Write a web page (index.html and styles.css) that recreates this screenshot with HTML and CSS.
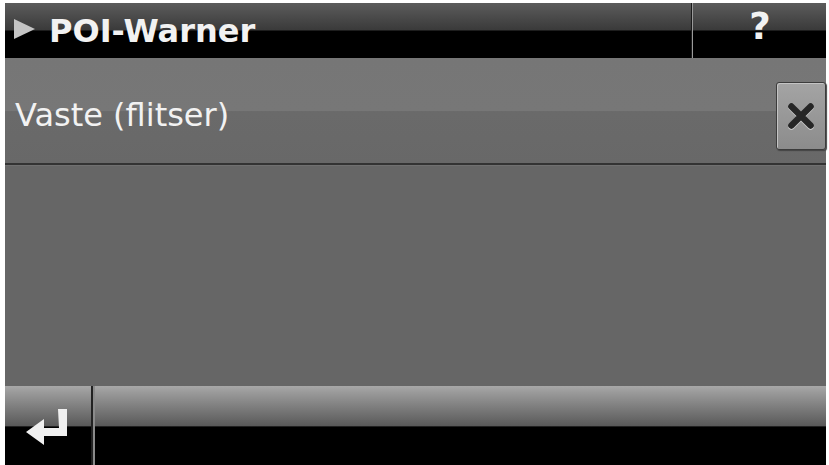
FILE: index.html
```html
<!DOCTYPE html>
<html lang="nl">
<head>
  <meta charset="UTF-8" />
  <meta name="viewport" content="width=device-width, initial-scale=1" />
  <title>POI-Warner</title>
  <link rel="stylesheet" href="styles.css">
</head>
<body>

  <div class="scherm">
    <header class="kop">
      <div class="kop-titel">
        <span class="pijl"></span>
        <h1>POI-Warner</h1>
      </div>
      <button class="kop-help" type="button">?</button>
    </header>

    <main class="lijst">
      <div class="rij">
        <span class="rij-tekst">Vaste (flitser)</span>
        <button class="wis" type="button" aria-label="Verwijderen">
          <svg viewBox="0 0 30 30" width="32" height="32">
            <path class="wis-licht" d="M6 7 L24 25 M24 7 L6 25" />
            <path class="wis-kruis" d="M6 6 L24 24 M24 6 L6 24" />
          </svg>
        </button>
      </div>
    </main>

    <footer class="voet">
      <button class="terug" type="button" aria-label="Terug">
        <svg viewBox="0 0 46 40" width="46" height="40">
          <path d="M33 1 H42 V28 H19 V37 L1 24 L19 11 V20 H34 Z" />
        </svg>
      </button>
      <div class="voet-rest"></div>
    </footer>
  </div>

</body>
</html>
```

FILE: styles.css
```css
:root {
  --grijs: #666;
  --zwart: #000;
  --wit: #f2f2f2;
  --font-family: 'DejaVu Sans', 'Open Sans', sans-serif;
}

body {
  margin: 0;
  background-color: #fff;
  font-family: var(--font-family);
}

.scherm {
  width: 821px;
  height: 462px;
  margin: 3px 3px 0 5px;
  display: flex;
  flex-direction: column;
  background-color: var(--grijs);
}

/* bovenbalk: glanzende bovenhelft, zwarte onderhelft */
.kop {
  height: 55px;
  display: flex;
  background: linear-gradient(#5c5c5c, #3a3a3a 49%, #000 51%, #000);
}

.kop-titel {
  flex: 1;
  display: flex;
  align-items: center;
  padding-left: 9px;
  border-right: 1px solid #1a1a1a;
  box-shadow: 1px 0 0 #9a9a9a;
}

.pijl {
  width: 0;
  height: 0;
  border-top: 10px solid transparent;
  border-bottom: 10px solid transparent;
  border-left: 21px solid #c4c4c4;
  margin-right: 14px;
  margin-top: -3px;
}

.kop-titel h1 {
  margin: 0;
  color: var(--wit);
  font-size: 32px;
  font-weight: bold;
}

.kop-help {
  width: 132px;
  margin-left: 2px;
  background: none;
  border: none;
  color: var(--wit);
  font-family: var(--font-family);
  font-size: 37px;
  font-weight: bold;
  padding: 0 0 8px;
}

.lijst {
  flex: 1;
}

.rij {
  height: 105px;
  display: flex;
  align-items: center;
  justify-content: space-between;
  background: linear-gradient(#767676, #777 50%, #6a6a6a 51%, #686868);
  border-bottom: 2px solid #333;
  box-shadow: 0 1px 0 #707070;
}

.rij-tekst {
  padding: 8px 0 0 10px;
  color: var(--wit);
  font-size: 32px;
}

.wis {
  width: 50px;
  height: 68px;
  margin-top: 10px;
  display: flex;
  align-items: center;
  justify-content: center;
  padding: 0;
  border: 1px solid #3c3c3c;
  border-radius: 3px;
  background: linear-gradient(#a4a4a4, #8c8c8c);
  box-shadow: inset 1px 1px 0 #c4c4c4, 1px 1px 1px #444;
}

.wis path {
  fill: none;
  stroke-width: 6;
  stroke-linecap: round;
}

.wis-licht {
  stroke: #c8c8c8;
}

.wis-kruis {
  stroke: #262626;
}

/* onderbalk */
.voet {
  height: 79px;
  display: flex;
  background: linear-gradient(#a8a8a8, #9a9a9a 8%, #5a5a5a 50%, #000 52%, #000);
}

.terug {
  width: 88px;
  padding: 4px 0 0;
  display: flex;
  justify-content: center;
  align-items: center;
  background: none;
  border: none;
  border-right: 2px solid #222;
  box-shadow: 2px 0 0 #8a8a8a;
}

.terug path {
  fill: #f0f0f0;
}

.voet-rest {
  flex: 1;
  margin-left: 2px;
}
```
